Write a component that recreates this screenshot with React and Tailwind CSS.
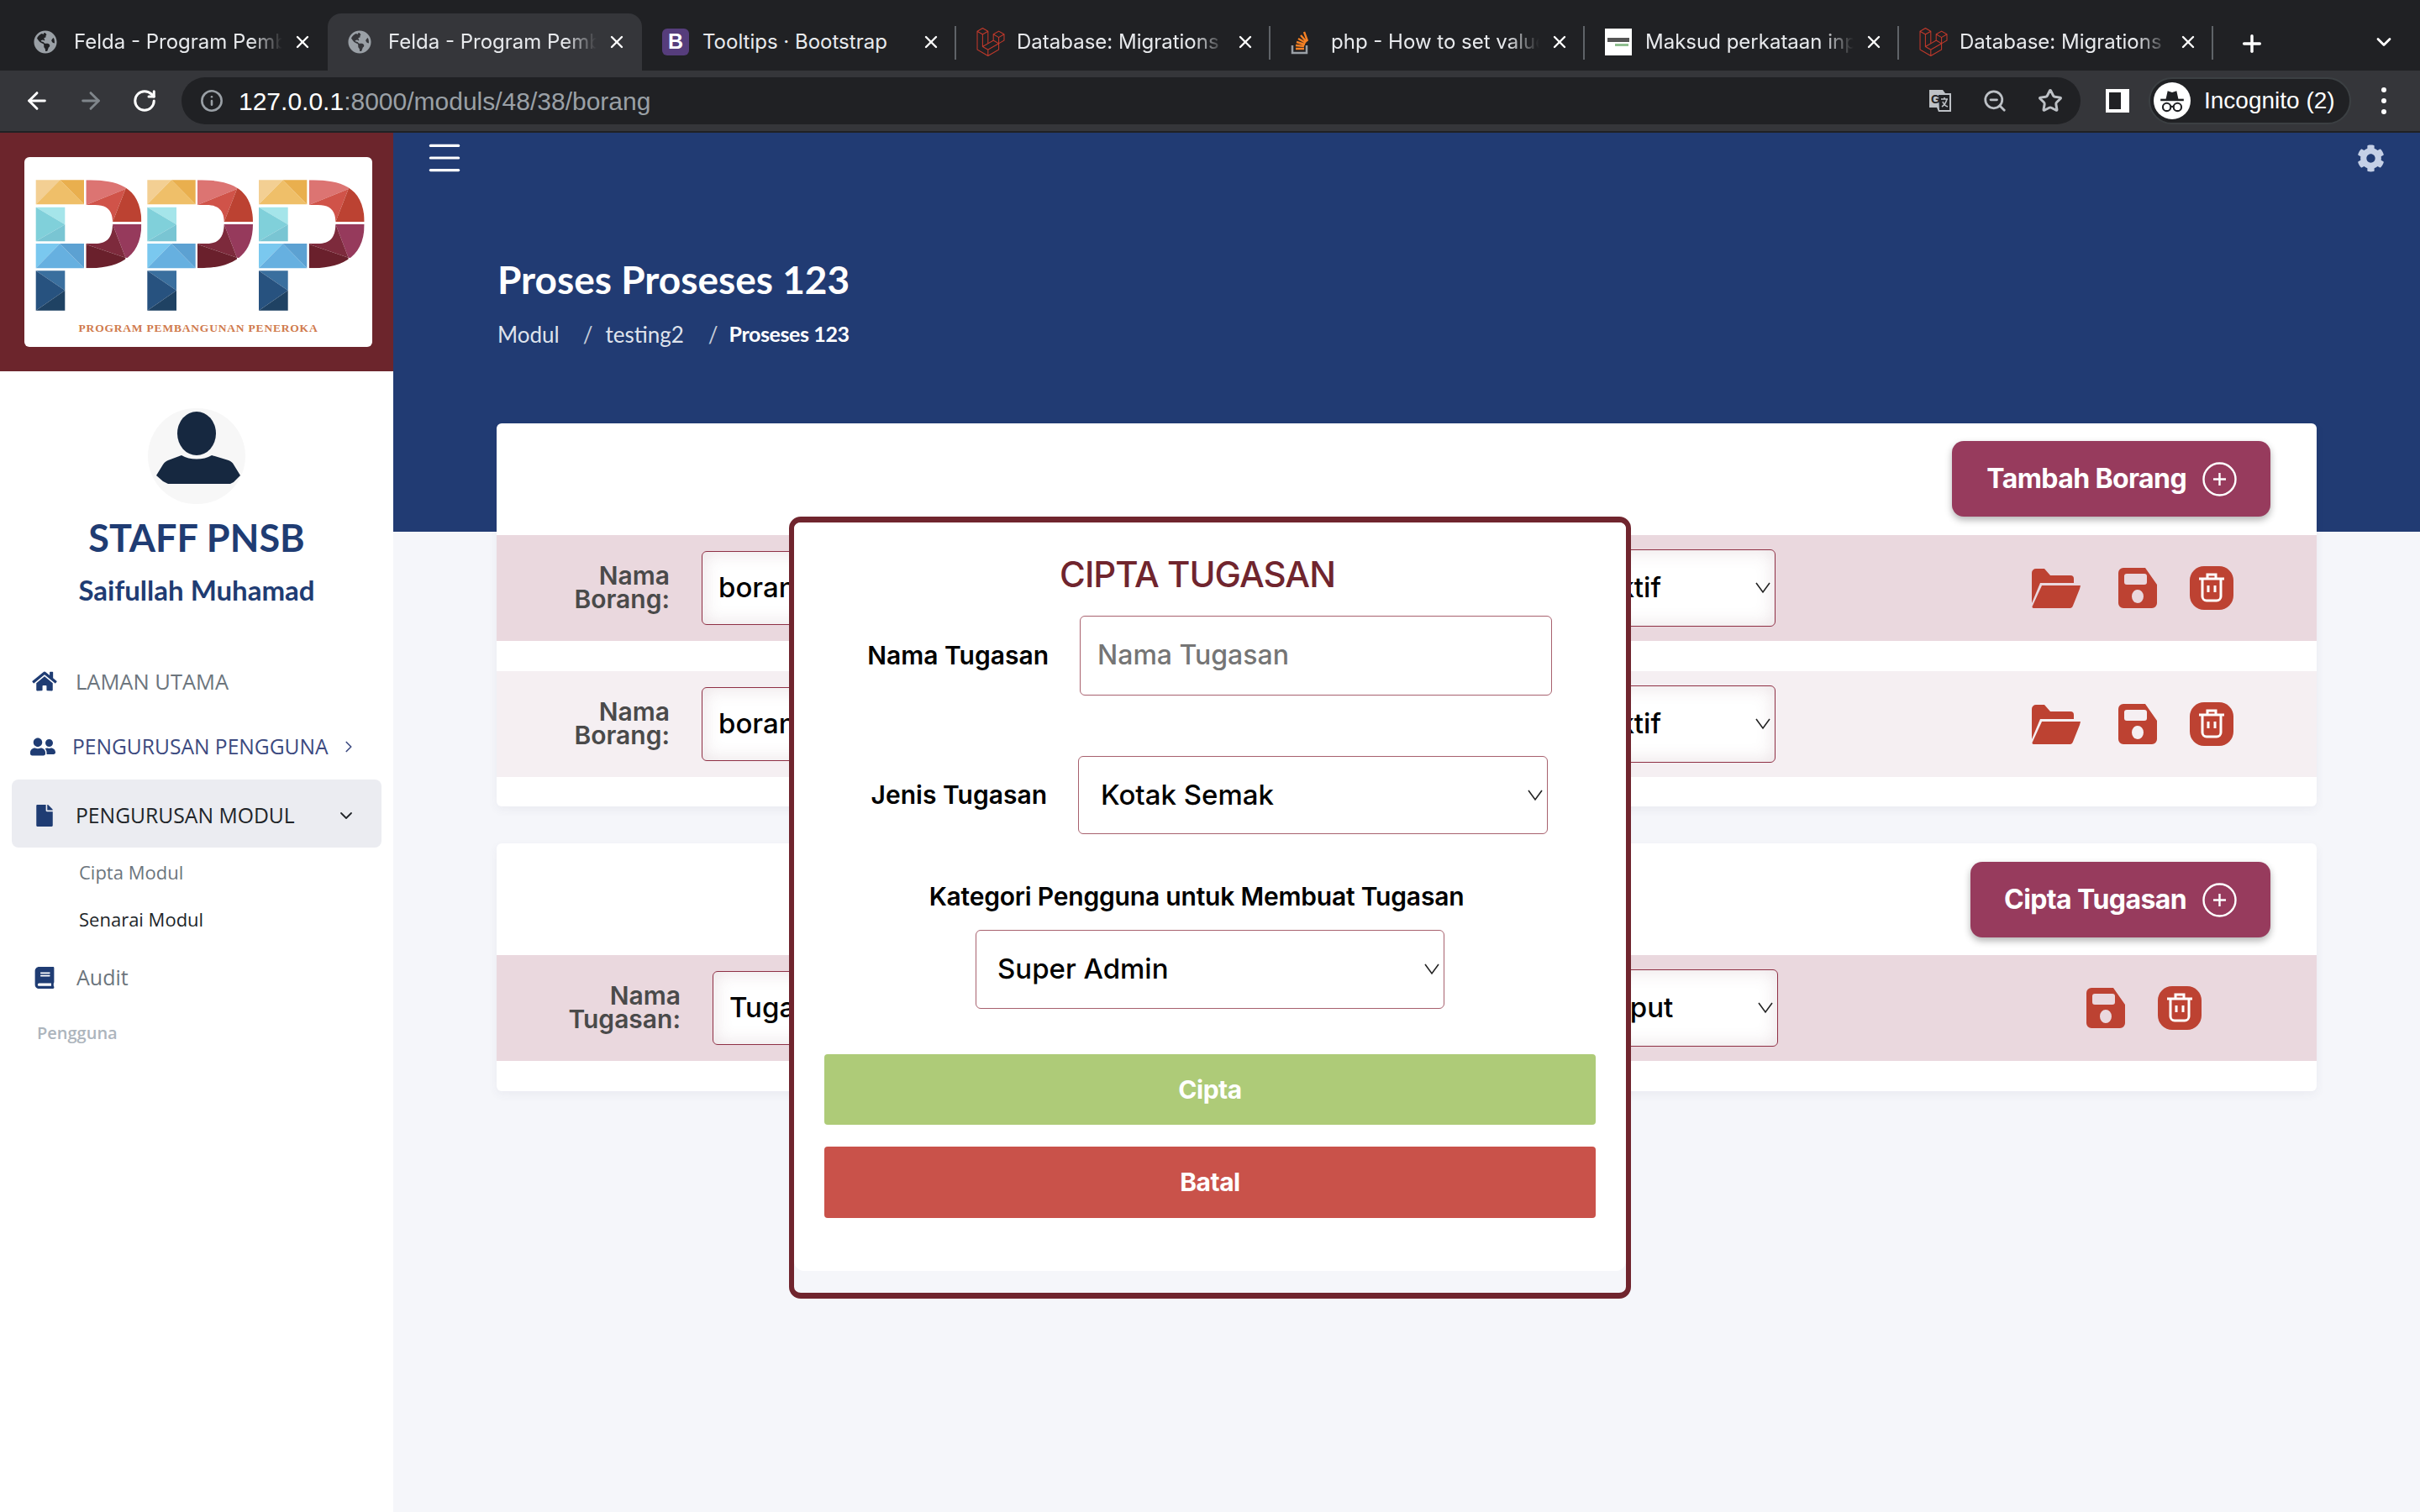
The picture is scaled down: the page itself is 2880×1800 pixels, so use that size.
import React from "react";
import { ArrowLeft, ArrowRight, RotateCw, Info, ZoomOut, Star, Plus, X, ChevronDown, ChevronRight, Menu } from "lucide-react";
import { FaHome, FaUserFriends, FaFile, FaBook, FaCog, FaGlobeAmericas, FaLaravel } from "react-icons/fa";

const Globe = () => <FaGlobeAmericas className="w-[28px] h-[28px] text-[#9aa0a6]" />;
const Laravel = () => <FaLaravel className="w-[34px] h-[36px] text-[#c0392b]" />;

const BootstrapIcon = () => (
  <div className="w-[32px] h-[32px] rounded-[6px] bg-[#563d7c] flex items-center justify-center text-white font-bold text-[25px] font-['Liberation_Sans',sans-serif]">
    B
  </div>
);

const StackIcon = () => (
  <svg viewBox="0 0 24 30" className="w-[24px] h-[30px]">
    <path d="M2 19v9h17v-9" fill="none" stroke="#9aa0a6" strokeWidth="2.5" />
    <path d="M6 23h10" stroke="#f48024" strokeWidth="2.5" />
    <path d="M6 19l10 1M7 15l10 3M9 11l9 5M12 7l7 8M16 3l4 11" stroke="#f48024" strokeWidth="2.4" fill="none" />
  </svg>
);

const PageThumb = () => (
  <div className="w-[32px] h-[32px] bg-white flex flex-col items-center justify-center gap-[2px]">
    <div className="w-[26px] h-[5px] bg-[#555]" />
    <div className="w-[16px] h-[3px] ml-[8px] bg-[#8fbf8f]" />
  </div>
);

const tabs = [
  { title: "Felda - Program Pembangunan", icon: <Globe />, fade: true },
  { title: "Felda - Program Pembangunan", icon: <Globe />, fade: true, active: true },
  { title: "Tooltips · Bootstrap", icon: <BootstrapIcon /> },
  { title: "Database: Migrations - Laravel", icon: <Laravel />, fade: true },
  { title: "php - How to set value of", icon: <StackIcon />, fade: true },
  { title: "Maksud perkataan input dalam", icon: <PageThumb />, fade: true },
  { title: "Database: Migrations - Laravel", icon: <Laravel />, fade: true },
];

const Tab = ({ title, icon, fade, active, divider }) => (
  <div className={`relative w-[374px] h-[68px] shrink-0 flex items-center rounded-t-[16px] ${active ? "bg-[#35363a]" : ""}`}>
    <div className="w-[72px] pl-[24px] flex items-center justify-start">{icon}</div>
    <div
      className={`w-[248px] whitespace-nowrap overflow-hidden text-[24px] text-[#e8eaed] ${
        fade ? "[mask-image:linear-gradient(to_right,black_85%,transparent)]" : ""
      }`}
    >
      {title}
    </div>
    <X className="ml-[12px] w-[24px] h-[24px] text-white" strokeWidth={2.4} />
    {divider && <div className="absolute right-0 top-[15px] h-[40px] w-[2px] bg-[#5f6368]" />}
  </div>
);

const TranslateIcon = () => (
  <svg viewBox="0 0 28 28" className="w-[28px] h-[28px]">
    <path d="M1 1h16l3 4h7v22H12l-2-5H1z" fill="#bdc1c6" />
    <path d="M12 7h13v18H13z" fill="#202124" />
    <text x="3" y="17" fontSize="14" fontWeight="700" fill="#202124" fontFamily="Liberation Sans">G</text>
    <path d="M15 12h8M19 10v2M22 12c-1 4-3 7-6 9M17 15c1 3 3 5 6 6" stroke="#bdc1c6" strokeWidth="1.6" fill="none" />
  </svg>
);

const IncognitoIcon = () => (
  <div className="w-[44px] h-[44px] rounded-full bg-white flex items-center justify-center">
    <svg viewBox="0 0 32 32" className="w-[34px] h-[34px]">
      <path d="M9 14l2-9 5 1.5L21 5l2 9z" fill="#202124" />
      <path d="M3 15h26" stroke="#202124" strokeWidth="2.4" />
      <circle cx="10" cy="23" r="4.4" fill="none" stroke="#202124" strokeWidth="2" />
      <circle cx="22" cy="23" r="4.4" fill="none" stroke="#202124" strokeWidth="2" />
      <path d="M14.4 22.5h3.2" stroke="#202124" strokeWidth="2" />
    </svg>
  </div>
);

const BrowserChrome = () => (
  <div className="h-[158px] shrink-0 bg-[#202124] font-['Inter',sans-serif]">
    <div className="h-[84px] pt-[16px] pl-[16px] flex items-start">
      {tabs.map((t, i) => (
        <Tab key={i} {...t} divider={i >= 2} />
      ))}
      <Plus className="ml-[30px] mt-[20px] w-[32px] h-[32px] text-white" strokeWidth={2.6} />
      <ChevronDown className="ml-[127px] mt-[20px] w-[28px] h-[28px] text-white" strokeWidth={2.4} />
    </div>
    <div className="h-[72px] bg-[#35363a] flex items-center">
      <ArrowLeft className="ml-[28px] w-[32px] h-[32px] text-white" strokeWidth={2.2} />
      <ArrowRight className="ml-[32px] w-[32px] h-[32px] text-[#80868b]" strokeWidth={2.2} />
      <RotateCw className="ml-[33px] w-[30px] h-[30px] text-white" strokeWidth={2.4} />
      <div className="ml-[29px] w-[2260px] h-[56px] rounded-full bg-[#202124] flex items-center">
        <Info className="ml-[22px] w-[28px] h-[28px] text-[#9aa0a6]" strokeWidth={2.2} />
        <div className="ml-[18px] text-[30px] font-['Liberation_Sans',sans-serif] text-[#9aa0a6]">
          <span className="text-white">127.0.0.1</span>:8000/moduls/48/38/borang
        </div>
        <div className="ml-auto mr-[21px] flex items-center gap-[36px]">
          <TranslateIcon />
          <ZoomOut className="w-[30px] h-[30px] text-[#bdc1c6]" strokeWidth={2.2} />
          <Star className="w-[30px] h-[30px] text-[#bdc1c6]" strokeWidth={2.4} />
        </div>
      </div>
      <div className="ml-[30px] w-[28px] h-[28px] border-[4px] border-white flex">
        <div className="w-[14px] bg-[#202124]" />
        <div className="flex-1 bg-white" />
      </div>
      <div className="ml-[23px] w-[241px] h-[56px] rounded-full bg-[#202124] border-2 border-[#3c4043] flex items-center pl-[4px]">
        <IncognitoIcon />
        <span className="ml-[16px] text-[28px] text-white font-['Liberation_Sans',sans-serif]">Incognito (2)</span>
      </div>
      <div className="ml-[36px] flex flex-col gap-[7px]">
        <div className="w-[6px] h-[6px] rounded-full bg-white" />
        <div className="w-[6px] h-[6px] rounded-full bg-white" />
        <div className="w-[6px] h-[6px] rounded-full bg-white" />
      </div>
    </div>
  </div>
);

// one letter of the logo, coordinates are in logo space
const LogoP = ({ dx }) => (
  <g transform={`translate(${dx} 0)`}>
    <polygon points="128,193 214,193 128,280" fill="#f3cf93" />
    <polygon points="214,193 300,280 128,280" fill="#efbf69" />
    <polygon points="214,193 300,193 300,280" fill="#e9af4e" />
    <g clipPath="url(#bowlTop)">
      <polygon points="300,180 460,180 448,225 307,282" fill="#dc7472" />
      <polygon points="307,282 448,225 402,343 300,343" fill="#d05349" />
      <polygon points="448,225 460,180 520,180 520,343 402,343" fill="#bc4232" />
    </g>
    <polygon points="128,290 232,290 232,352" fill="#a5e5ea" />
    <polygon points="128,290 232,352 128,412" fill="#80d0da" />
    <polygon points="128,412 232,352 232,412" fill="#79c5d3" />
    <polygon points="128,420 214,420 128,508" fill="#7ac8ef" />
    <polygon points="214,420 300,508 128,508" fill="#66b0e0" />
    <polygon points="214,420 300,420 300,508" fill="#5ca1d2" />
    <g clipPath="url(#bowlBottom)">
      <polygon points="402,350 520,350 520,480 448,470" fill="#963a5c" />
      <polygon points="300,420 300,350 402,350 448,470" fill="#7d2a3c" />
      <polygon points="300,420 448,470 448,520 300,520" fill="#6a202c" />
    </g>
    <polygon points="128,517 232,517 232,587" fill="#3a6f9e" />
    <polygon points="128,517 232,587 128,659" fill="#27527f" />
    <polygon points="128,659 232,587 232,659" fill="#1f4263" />
  </g>
);

const Logo = () => (
  <div className="w-[414px] h-[226px] bg-white rounded-[6px] flex flex-col items-center">
    <svg viewBox="87 111 1242 570" className="w-[414px] h-[190px]">
      <defs>
        <clipPath id="bowlTop">
          <path d="M307 193C400 193 505 205 505 343L402 343C402 300 380 282 340 282L307 282Z" />
        </clipPath>
        <clipPath id="bowlBottom">
          <path d="M307 420L340 420C380 420 402 400 402 350L505 350C505 480 410 508 307 508Z" />
        </clipPath>
      </defs>
      <LogoP dx={0} />
      <LogoP dx={398} />
      <LogoP dx={796} />
    </svg>
    <div className="h-[28px] leading-[28px] text-[13.5px] font-bold tracking-[0.8px] text-[#d07a4c] font-['Liberation_Serif',serif] whitespace-nowrap">
      PROGRAM PEMBANGUNAN PENEROKA
    </div>
  </div>
);

const Sidebar = () => (
  <div className="w-[468px] shrink-0 bg-white font-['Open_Sans',sans-serif]">
    <div className="h-[284px] bg-[#6c252c] pt-[29px] pl-[29px]">
      <Logo />
    </div>
    <div className="flex flex-col items-center">
      <div className="mt-[44px] w-[116px] h-[114px] rounded-full bg-[#f7f7f7] flex justify-center">
        <svg viewBox="0 0 116 114" className="w-[116px] h-[114px]">
          <ellipse cx="58" cy="30" rx="23" ry="26" fill="#162840" />
          <path d="M40 56c10 6 26 6 36 0l20 6c3 1 5 3 6 5l8 13-8 8-4 2H24l-6-3-8-7 8-13c2-3 4-4 6-5z" fill="#162840" />
        </svg>
      </div>
      <div className="mt-[12px] h-[56px] leading-[56px] text-[45px] font-bold text-[#1f3c73] font-['Lato',sans-serif]">STAFF PNSB</div>
      <div className="mt-[12px] h-[44px] leading-[44px] text-[33px] font-bold text-[#1f3c73] font-['Lato',sans-serif]">Saifullah Muhamad</div>
    </div>
    <nav className="mt-[48px] text-[25px]">
      <div className="h-[78px] flex items-center pl-[38px] text-[#6c757d]">
        <FaHome className="w-[30px] h-[26px] text-[#1f3c73]" />
        <span className="ml-[22px] text-[25.5px]">LAMAN UTAMA</span>
      </div>
      <div className="h-[78px] flex items-center pl-[36px] text-[#3c4a80]">
        <FaUserFriends className="w-[30px] h-[24px] text-[#1f3c73]" />
        <span className="ml-[20px] text-[24.6px]">PENGURUSAN PENGGUNA</span>
        <ChevronRight className="ml-[13px] w-[22px] h-[22px]" strokeWidth={1.8} />
      </div>
      <div className="mx-[14px] h-[81px] rounded-[8px] bg-[#ebecf1] flex items-center pl-[28px] pt-[4px] text-[#212529]">
        <FaFile className="w-[22px] h-[26px] text-[#1f3c73]" />
        <span className="ml-[26px] text-[24.7px]">PENGURUSAN MODUL</span>
        <ChevronDown className="ml-auto mr-[30px] w-[24px] h-[24px]" strokeWidth={1.8} />
      </div>
      <div className="mt-[1px] h-[56px] flex items-center pl-[94px] text-[22px] text-[#6c757d]">Cipta Modul</div>
      <div className="h-[56px] flex items-center pl-[94px] text-[22px] text-[#212529]">Senarai Modul</div>
      <div className="h-[84px] flex items-center pl-[41px] text-[#6c757d]">
        <FaBook className="w-[24px] h-[26px] text-[#1f3c73]" />
        <span className="ml-[26px]">Audit</span>
      </div>
      <div className="h-[48px] flex items-center pl-[44px] text-[20px] font-semibold text-[#adb5bd]">Pengguna</div>
    </nav>
  </div>
);

const Chevron = () => (
  <svg viewBox="0 0 18 14" className="absolute right-[6px] top-1/2 -translate-y-1/2 w-[18px] h-[14px] pointer-events-none">
    <path d="M1 1l8 11 8-11" fill="none" stroke="#222" strokeWidth="1.6" />
  </svg>
);

const FolderOpen = () => (
  <svg viewBox="0 0 58 47" className="w-[58px] h-[47px] mr-[45px]">
    <path fill="#bd4232" d="M0 41V5a5 5 0 0 1 5-5H15L22 8H46a4 4 0 0 1 4 4V17H10z" />
    <path fill="#bd4232" d="M12 20H58L57 24 49 44a4 4 0 0 1-3 3H2a2 2 0 0 1-1-3z" />
  </svg>
);

const Floppy = () => (
  <svg viewBox="0 0 46 48" className="w-[46px] h-[48px]">
    <path
      fillRule="evenodd"
      fill="#bd4232"
      d="M6 0H32L46 20V42a6 6 0 0 1-6 6H6a6 6 0 0 1-6-6V6a6 6 0 0 1 6-6zM10 7a3 3 0 0 0-3 3V17a3 3 0 0 0 3 3H31a3 3 0 0 0 3-3V10a3 3 0 0 0-3-3zM23 26a7 8 0 1 0 0 16 7 8 0 1 0 0-16z"
    />
  </svg>
);

const TrashBadge = () => (
  <svg viewBox="0 0 52 52" className="w-[52px] h-[52px]">
    <rect width="52" height="52" rx="17" fill="#bd4232" />
    <path d="M11 15h30M21 14v-4h10v4M15 16v20a5 5 0 0 0 5 5h12a5 5 0 0 0 5-5V16" fill="none" stroke="#fff" strokeWidth="3" />
    <path d="M22 23v8M30 23v8" stroke="#fff" strokeWidth="3" />
  </svg>
);

const PlusCircle = () => (
  <svg viewBox="0 0 41 41" className="w-[41px] h-[41px]">
    <circle cx="20.5" cy="20.5" r="19" fill="none" stroke="#fff" strokeWidth="2.4" />
    <path d="M20.5 13v15M13 20.5h15" stroke="#fff" strokeWidth="2.4" />
  </svg>
);

const AddButton = ({ label, width }) => (
  <button className={`h-[90px] ${width} rounded-[14px] bg-[#973b5d] shadow-[0_4px_8px_rgba(0,0,0,0.3)] flex items-center justify-end pr-[40px] gap-[19px] text-white text-[32px] font-bold font-['Inter',sans-serif] tracking-[-0.6px]`}>
    {label}
    <PlusCircle />
  </button>
);

const FieldRow = ({ label1, label2, value, status, labelWidth, inputWidth, selectWidth, tint, folder, iconsGap }) => (
  <div className={`h-[126px] flex items-center ${tint}`}>
    <div className={`${labelWidth} -mt-[3px] text-right text-[30px] leading-[28px] font-semibold text-[#4a4a4a]`}>
      {label1}
      <br />
      {label2}
    </div>
    <input
      readOnly
      value={value}
      className={`ml-[38px] ${inputWidth} h-[88px] rounded-[6px] border border-[#8f3045] bg-white pl-[19px] pb-[2px] text-[33px] font-medium text-black shadow-[inset_0_0_22px_rgba(120,60,80,0.16)]`}
    />
    <div className={`relative ml-[20px] ${selectWidth} h-[92px]`}>
      <select className="appearance-none w-full h-full rounded-[6px] border border-[#8f3045] bg-white px-[22px] text-[33px] font-medium text-black shadow-[inset_0_0_22px_rgba(120,60,80,0.16)]">
        <option>{status}</option>
      </select>
      <Chevron />
    </div>
    <div className={`flex items-center ${iconsGap}`}>
      {folder && <FolderOpen />}
      <Floppy />
      <div className="ml-[39px]">
        <TrashBadge />
      </div>
    </div>
  </div>
);

const ModalSelect = ({ value, className, pad }) => (
  <div className={`relative ${className}`}>
    <select className={`appearance-none w-full h-full rounded-[6px] border border-[#a8616e] bg-white ${pad} text-[33px] font-medium text-black`}>
      <option>{value}</option>
    </select>
    <Chevron />
  </div>
);

const Modal = () => (
  <div className="absolute left-[939px] top-[615px] w-[1002px] h-[931px] rounded-[14px] border-[7px] border-[#70252e] border-l-[6px] border-r-[6px] bg-[#f5f6fa] overflow-hidden font-['Inter',sans-serif]">
    <div className="h-[891px] bg-white rounded-b-[12px] flex flex-col">
      <h2 className="mt-[38px] h-[48px] leading-[48px] text-center text-[42px] font-medium tracking-[-1px] text-[#70252e] -translate-x-[15px]">
        CIPTA TUGASAN
      </h2>
      <div className="mt-[25px] flex items-center h-[95px]">
        <label className="w-[303px] text-right text-[30px] font-semibold text-black">Nama Tugasan</label>
        <input
          placeholder="Nama Tugasan"
          className="ml-[37px] w-[562px] h-[95px] rounded-[6px] border border-[#a8616e] bg-white pl-[20px] pb-[2px] text-[32px] placeholder:text-[#757575] font-medium"
        />
      </div>
      <div className="mt-[72px] flex items-center h-[93px]">
        <label className="w-[301px] text-right text-[30px] font-semibold text-black">Jenis Tugasan</label>
        <ModalSelect value="Kotak Semak" pad="pl-[26px]" className="ml-[37px] w-[559px] h-[93px]" />
      </div>
      <div className="mt-[54px] h-[40px] leading-[40px] text-center text-[30px] font-semibold tracking-[-0.2px] text-black -translate-x-[16px]">
        Kategori Pengguna untuk Membuat Tugasan
      </div>
      <ModalSelect value="Super Admin" pad="pl-[25px]" className="mt-[20px] ml-[216px] w-[558px] h-[94px]" />
      <button className="mt-[54px] mx-[36px] h-[84px] rounded-[4px] bg-[#aecb78] text-white text-[30px] font-bold tracking-[-0.5px]">Cipta</button>
      <button className="mt-[26px] mx-[36px] h-[85px] rounded-[4px] bg-[#c9524a] text-white text-[30px] font-bold tracking-[-0.5px]">Batal</button>
    </div>
  </div>
);

const Content = () => (
  <div className="flex-1 relative bg-[#f5f6fa] font-['Inter',sans-serif]">
    <div className="h-[475px] bg-[#213b73] relative">
      <div className="flex items-start justify-between pl-[36px] pr-[42px] pt-[5px]">
        <Menu className="w-[50px] h-[50px] text-white" strokeWidth={1.5} />
        <FaCog className="mt-[9px] w-[33px] h-[33px] text-[#c5d0e6]" />
      </div>
      <h1 className="mt-[94px] ml-[124px] h-[52px] leading-[52px] text-[46px] font-bold text-white font-['Lato',sans-serif]">
        Proses Proseses 123
      </h1>
      <div className="mt-[22px] ml-[124px] flex items-center h-[34px] text-[26px] text-[#dfe3ec] font-['Lato',sans-serif]">
        <span>Modul</span>
        <span className="ml-[28px] text-[#c5ccd9]">/</span>
        <span className="ml-[15px]">testing2</span>
        <span className="ml-[29px] text-[#c5ccd9]">/</span>
        <span className="ml-[13px] text-white font-bold text-[25px] tracking-[-0.4px]">Proseses 123</span>
      </div>
    </div>
    <div className="absolute left-[123px] top-[346px] w-[2166px]">
      <div className="h-[456px] bg-white rounded-[6px] shadow-[0_4px_12px_rgba(60,70,110,0.06)]">
        <div className="h-[133px] pt-[21px] pr-[55px] flex justify-end">
          <AddButton label="Tambah Borang" width="w-[379px]" />
        </div>
        <FieldRow label1="Nama" label2="Borang:" value="borang 1" status="Aktif" labelWidth="w-[206px]" inputWidth="w-[1025px]" selectWidth="w-[233px]" tint="bg-[#ead8de]" folder iconsGap="ml-[305px]" />
        <div className="h-[36px]" />
        <FieldRow label1="Nama" label2="Borang:" value="borang 2" status="Aktif" labelWidth="w-[206px]" inputWidth="w-[1025px]" selectWidth="w-[233px]" tint="bg-[#f5eff2]" folder iconsGap="ml-[305px]" />
      </div>
      <div className="mt-[44px] h-[295px] bg-white rounded-[6px] shadow-[0_4px_12px_rgba(60,70,110,0.06)]">
        <div className="h-[133px] pt-[22px] pr-[55px] flex justify-end">
          <AddButton label="Cipta Tugasan" width="w-[357px]" />
        </div>
        <FieldRow label1="Nama" label2="Tugasan:" value="Tugasan 1" status="Input" labelWidth="w-[219px]" inputWidth="w-[1020px]" selectWidth="w-[228px]" tint="bg-[#ead8de]" iconsGap="ml-[367px]" />
      </div>
    </div>
  </div>
);

export default function App() {
  return (
    <div className="relative w-[2880px] h-[1800px] overflow-hidden flex flex-col">
      <BrowserChrome />
      <div className="flex-1 flex">
        <Sidebar />
        <Content />
      </div>
      <Modal />
    </div>
  );
}
